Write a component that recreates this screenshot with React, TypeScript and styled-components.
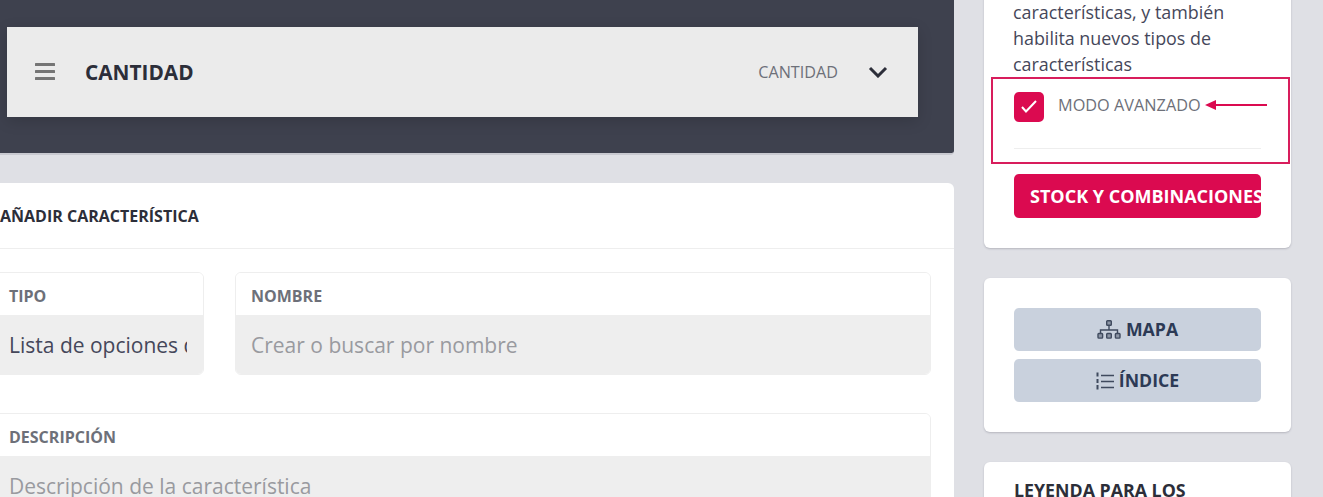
import React from "react";
import styled, { createGlobalStyle } from "styled-components";

const Global = createGlobalStyle`
  html, body { margin: 0; padding: 0; background: #dfe0e5; }
  body { font-family: "Open Sans", "Liberation Sans", sans-serif; overflow: hidden; }
  * { box-sizing: border-box; }
`;

const Page = styled.div`
  display: grid;
  grid-template-columns: 954px 307px;
  column-gap: 30px;
  height: 497px;
  overflow: hidden;
  background: #dfe0e5;
`;
const Main = styled.main`
  min-width: 0;
`;
const Hero = styled.header`
  height: 155px;
  padding: 27px 36px 0 7px;
  background: #3e414e;
  border-bottom: 2px solid #c8c9d0;
  border-bottom-right-radius: 4px;
`;
const Bar = styled.div`
  height: 90px;
  padding: 0 30px 0 28px;
  display: flex;
  align-items: center;
  background: #ebebeb;
  box-shadow: 0 4px 14px rgba(0, 0, 0, 0.15);
`;
const BarTitle = styled.h1`
  margin: 0 0 0 30px;
  flex: 1;
  font-size: 20.8px;
  line-height: 24px;
  font-weight: 700;
  color: #2c2e39;
`;
const BarSelect = styled.span`
  font-size: 16.2px;
  color: #6d7079;
  margin-right: 30px;
`;
const Card = styled.section`
  margin: 28px 0 0 -30px;
  background: #fff;
  border-radius: 6px 6px 0 0;
  height: 400px;
`;
const CardHead = styled.div`
  height: 66px;
  padding-left: 30px;
  display: flex;
  align-items: center;
  border-bottom: 1px solid #eeeeee;
`;
const CardTitle = styled.h2`
  margin: 0;
  font-size: 16px;
  font-weight: 700;
  color: #2c2e39;
`;
const FieldRow = styled.div`
  display: grid;
  grid-template-columns: 211px 1fr;
  column-gap: 31px;
  padding: 23px 23px 0 23px;
`;
const Field = styled.div`
  border: 1px solid #eeeeee;
  border-radius: 6px;
  overflow: hidden;
  min-width: 0;
`;
const FieldLabel = styled.div`
  height: 42px;
  padding: 3px 15px 0;
  display: flex;
  align-items: center;
  background: #fff;
  font-size: 16px;
  font-weight: 700;
  color: #6d7079;
`;
const FieldValue = styled.div<{ $placeholder?: boolean }>`
  height: 59px;
  padding: 0 16px 0 15px;
  display: flex;
  align-items: center;
  background: #eeeeee;
  font-size: 21px;
  white-space: nowrap;
  overflow: hidden;
  color: ${(p) => (p.$placeholder ? "#999a9f" : "#45475a")};
`;
const ClipText = styled.span`
  display: block;
  overflow: hidden;
`;
const WideField = styled(Field)`
  margin: 38px 23px 0;
`;
const Side = styled.aside`
  margin-top: -21px;
  display: flex;
  flex-direction: column;
  gap: 30px;
`;
const SideCard = styled.div`
  background: #fff;
  border-radius: 6px;
  padding: 30px;
  box-shadow: 0 1px 2px rgba(60, 60, 80, 0.25);
`;
const ModeCard = styled(SideCard)`
  position: relative;
  padding-top: 20px;
  height: 269px;
`;
const Help = styled.p`
  margin: 0 -10px 0 -1px;
  font-size: 17.9px;
  line-height: 26px;
  color: #45475a;
`;
const ModeRow = styled.label`
  margin-top: 15px;
  display: flex;
  align-items: flex-start;
  gap: 14px;
  font-size: 16.3px;
  color: #6d7079;
`;
const Check = styled.span`
  width: 30px;
  height: 30px;
  border-radius: 5px;
  background: #db0a50;
  display: flex;
  align-items: center;
  justify-content: center;
`;
const ModeLabel = styled.span`
  line-height: 26px;
`;
const Divider = styled.hr`
  margin: 26px 0 25px;
  border: 0;
  border-top: 1px solid #eeeeee;
`;
const Highlight = styled.div`
  position: absolute;
  left: 7px;
  right: 1px;
  top: 98px;
  height: 87px;
  border: 2px solid #d81d5c;
  pointer-events: none;
`;
const Arrow = styled.svg`
  position: absolute;
  left: 220px;
  top: 120px;
`;
const Primary = styled.button`
  display: block;
  width: 100%;
  height: 44px;
  padding: 0 0 0 16px;
  border: 0;
  border-radius: 5px;
  background: #db0a50;
  color: #fff;
  font: 700 18px/44px "Open Sans", sans-serif;
  text-align: left;
  white-space: nowrap;
  overflow: hidden;
`;
const Stack = styled.div`
  display: flex;
  flex-direction: column;
  gap: 8px;
`;
const Secondary = styled.button`
  height: 43px;
  border: 0;
  border-radius: 5px;
  background: #c9d1dd;
  color: #2c3a55;
  font: 700 17.7px/43px "Open Sans", sans-serif;
  display: flex;
  align-items: center;
  justify-content: center;
  gap: 5px;
`;
const LegendCard = styled(SideCard)`
  padding-top: 15px;
`;
const LegendTitle = styled.h3`
  margin: 0;
  font-size: 17.8px;
  line-height: 26px;
  font-weight: 700;
  color: #2c2e39;
`;

const Bars = () => (
  <svg width="20" height="18" viewBox="0 0 20 18" fill="#757575">
    <rect x="0" y="0" width="20" height="3" rx="0.5" />
    <rect x="0" y="7" width="20" height="3" rx="0.5" />
    <rect x="0" y="14" width="20" height="3" rx="0.5" />
  </svg>
);
const Chevron = () => (
  <svg width="20" height="12" viewBox="0 0 20 12" fill="none" stroke="#2c2e39" strokeWidth="3">
    <path d="M2 2l8 8 8-8" />
  </svg>
);
const Tick = () => (
  <svg width="16" height="14" viewBox="0 0 16 14" fill="none" stroke="#fff" strokeWidth="2">
    <path d="M1 7l4 4.500 10-10.500" />
  </svg>
);
const SitemapIcon = () => (
  <svg width="24" height="19" viewBox="0 0 24 19" fill="#8d96a6" stroke="#3f4a5e" strokeWidth="1.4">
    <rect x="9.700" y="0.700" width="4.600" height="4.600" rx="0.800" />
    <path d="M12 5.500v4.500M3.500 13.500v-3.500h17v3.500" fill="none" />
    <rect x="1" y="13.500" width="4.600" height="4.600" rx="0.800" />
    <rect x="9.700" y="13.500" width="4.600" height="4.600" rx="0.800" />
    <rect x="18.400" y="13.500" width="4.600" height="4.600" rx="0.800" />
  </svg>
);
const ListIcon = () => (
  <svg width="18" height="18" viewBox="0 0 18 18" fill="none" stroke="#3f4a5e" strokeWidth="1.300">
    <path d="M5 3.500h13M5 9.500h13M5 15.500h13" />
    <path d="M1.500 0.500v4M1.500 7v4M1.500 13v4.500" strokeWidth="2" />
  </svg>
);

export default function App() {
  return (
    <>
      <Global />
      <Page>
        <Main>
          <Hero>
            <Bar>
              <Bars />
              <BarTitle>CANTIDAD</BarTitle>
              <BarSelect>CANTIDAD</BarSelect>
              <Chevron />
            </Bar>
          </Hero>
          <Card>
            <CardHead>
              <CardTitle>AÑADIR CARACTERÍSTICA</CardTitle>
            </CardHead>
            <FieldRow>
              <Field>
                <FieldLabel>TIPO</FieldLabel>
                <FieldValue>
                  <ClipText>Lista de opciones desplegable</ClipText>
                </FieldValue>
              </Field>
              <Field>
                <FieldLabel>NOMBRE</FieldLabel>
                <FieldValue $placeholder>Crear o buscar por nombre</FieldValue>
              </Field>
            </FieldRow>
            <WideField>
              <FieldLabel>DESCRIPCIÓN</FieldLabel>
              <FieldValue $placeholder>Descripción de la característica</FieldValue>
            </WideField>
          </Card>
        </Main>
        <Side>
          <ModeCard>
            <Help>
              características, y también habilita nuevos tipos de características
            </Help>
            <ModeRow>
              <Check>
                <Tick />
              </Check>
              <ModeLabel>MODO AVANZADO</ModeLabel>
            </ModeRow>
            <Divider />
            <Primary>STOCK Y COMBINACIONES</Primary>
            <Highlight />
            <Arrow width="64" height="12" viewBox="0 0 64 12">
              <path d="M1 6l11-5v4h51v2H12v4z" fill="#db0a50" />
            </Arrow>
          </ModeCard>
          <SideCard>
            <Stack>
              <Secondary>
                <SitemapIcon />
                MAPA
              </Secondary>
              <Secondary>
                <ListIcon />
                ÍNDICE
              </Secondary>
            </Stack>
          </SideCard>
          <LegendCard>
            <LegendTitle>LEYENDA PARA LOS</LegendTitle>
          </LegendCard>
        </Side>
      </Page>
    </>
  );
}
